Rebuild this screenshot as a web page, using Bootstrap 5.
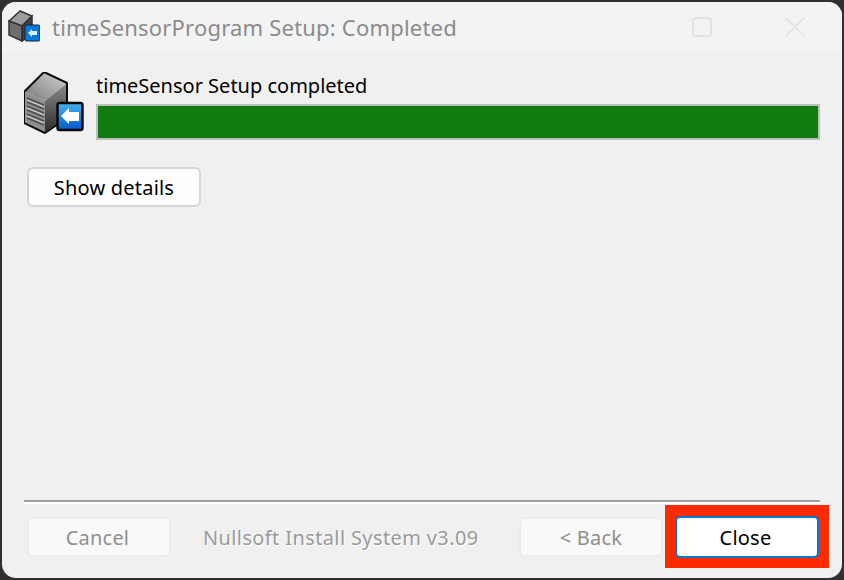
<!DOCTYPE html>
<html lang="en">
  <head>
    <meta charset="UTF-8" />
    <meta name="viewport" content="width=device-width, initial-scale=1.0" />
    <title>timeSensorProgram Setup: Completed</title>
    <link rel="stylesheet" href="https://cdn.jsdelivr.net/npm/bootstrap@5.3.2/dist/css/bootstrap.min.css" />
    <style>
      html, body { height: 100%; }
      body { background: #303030; padding: 2px; overflow: hidden; font-family: "Noto Sans", sans-serif; }
      .setup-win { height: 576px; background: #f0f0f0; border-radius: 14px; overflow: hidden; }
      .title-bar { height: 50px; background: #f3f3f3; padding: 0 0 0 6px; }
      .title-icon { width: 32px; height: 32px; margin: -2px 12px 0 0; filter: blur(0.6px); }
      .title-text { font-size: 22px; color: #8b8b8b; letter-spacing: 0.2px; white-space: nowrap; }
      .win-ctl { width: 20px; height: 20px; }
      .win-max { margin-right: 73px; }
      .win-close { margin-right: 37px; }
      .setup-body { padding: 20px 22px 0 22px; }
      .setup-icon { width: 60px; height: 62px; margin-right: 12px; flex: none; }
      .status-text { font-size: 20px; line-height: 28px; color: #000; white-space: nowrap; }
      .bar-track { height: 36px; border: 2px solid #bdbdbd; background: #107c10; margin-top: 4px; }
      .win-btn { width: 144px; height: 40px; padding: 1px 0 0 0; font-size: 20px; line-height: 1; letter-spacing: 0.2px; border-radius: 6px; color: #000; background: #fdfdfd; border: 2px solid #d6d6d6; }
      .details-btn { width: 174px; margin: 27px 0 0 3px; }
      .win-btn:disabled { background: #f9f9f9; border-color: #ececec; color: #8f8f8f; opacity: 1; }
      .cancel-btn { padding-right: 3px; }
      .foot-line { height: 2px; background: #a0a0a0; box-shadow: 0 2px 0 #fff; }
      .foot-row { margin-top: 15px; padding-left: 3px; }
      .foot-gap { height: 20px; }
      .brand-text { font-size: 20px; color: #9a9a9a; margin: 6px 0 0 32px; letter-spacing: 0.38px; white-space: nowrap; text-shadow: 1px 1px 0 #fff; }
      .red-mark { background: #ff2a00; padding: 11px 10px 10px 10px; margin: -12px -9px -10px 2px; line-height: 0; }
      .close-btn { background: #fff; border-color: #0078d4; height: 42px; border-radius: 5px; padding-right: 3px; }
    </style>
  </head>
  <body>
    <div class="setup-win d-flex flex-column">
      <div class="title-bar d-flex align-items-center">
        <svg class="title-icon" viewBox="0 0 32 32">
          <polygon points="12,1 1,11 14,16 24,6" fill="#9c9c9c" stroke="#333" stroke-width="1.5" />
          <polygon points="1,11 14,16 14,31 1,25" fill="#6e6e6e" stroke="#333" stroke-width="1.5" />
          <polygon points="24,6 14,16 14,31 24,24" fill="#3f3f3f" stroke="#333" stroke-width="1.5" />
          <rect x="17" y="15" width="15" height="16" rx="1.5" fill="#0a78d8" stroke="#124" stroke-width="1" />
          <polygon points="20,23 24,19 24,21 29,21 29,25 24,25 24,27" fill="#dff1ff" />
        </svg>
        <span class="title-text">timeSensorProgram Setup: Completed</span>
        <svg class="win-ctl win-max ms-auto" viewBox="0 0 20 20">
          <rect x="1" y="1" width="18" height="18" rx="2.5" fill="none" stroke="#e3e3e3" stroke-width="2" />
        </svg>
        <svg class="win-ctl win-close" viewBox="0 0 20 20">
          <path d="M0.5 0.5 L19.5 19.5 M19.5 0.5 L0.5 19.5" stroke="#e3e3e3" stroke-width="1.6" fill="none" />
        </svg>
      </div>
      <div class="setup-body flex-grow-1 d-flex flex-column">
        <div class="d-flex">
          <svg class="setup-icon" viewBox="0 0 60 62">
            <defs>
              <linearGradient id="topFace" x1="0" y1="1" x2="1" y2="0">
                <stop offset="0" stop-color="#777" />
                <stop offset="1" stop-color="#d2d2d2" />
              </linearGradient>
              <linearGradient id="sideFace" x1="0" y1="0" x2="0" y2="1">
                <stop offset="0" stop-color="#8a8a8a" />
                <stop offset="1" stop-color="#2c2c2c" />
              </linearGradient>
              <linearGradient id="badgeFill" x1="0" y1="0" x2="0" y2="1">
                <stop offset="0" stop-color="#45b4f0" />
                <stop offset="1" stop-color="#0058c8" />
              </linearGradient>
            </defs>
            <polygon points="20,1 1,20 21,29 42,12" fill="url(#topFace)" />
            <polygon points="1,20 21,29 21,60 1,50" fill="#8f8f8f" />
            <polygon points="42,12 21,29 21,60 42,46" fill="url(#sideFace)" />
            <path d="M3 26 L20 33 M3 30 L20 37 M3 34 L20 41 M3 38 L20 45 M3 42 L20 49 M3 46 L20 53" stroke="#4f4f4f" stroke-width="1.6" fill="none" />
            <path d="M3 28 L20 35 M3 36 L20 43 M3 44 L20 51" stroke="#cfcfcf" stroke-width="1.2" fill="none" />
            <polygon points="20,0 0,20 0,51 21,61 43,46 43,11" fill="none" stroke="#0a0a0a" stroke-width="2" stroke-linejoin="bevel" />
            <rect x="33.5" y="31" width="25" height="27" rx="2" fill="url(#badgeFill)" stroke="#050505" stroke-width="2.4" />
            <polygon points="37,44 45,36 45,40 55,40 55,49 45,49 45,52" fill="#fff" />
          </svg>
          <div class="flex-grow-1">
            <div class="status-text">timeSensor Setup completed</div>
            <div class="bar-track"></div>
          </div>
        </div>
        <div><button type="button" class="btn win-btn details-btn">Show details</button></div>
        <div class="mt-auto">
          <div class="foot-line"></div>
          <div class="foot-row d-flex align-items-start">
            <button type="button" class="btn win-btn cancel-btn" disabled>Cancel</button>
            <span class="brand-text flex-grow-1">Nullsoft Install System v3.09</span>
            <button type="button" class="btn win-btn" disabled>&lt; Back</button>
            <div class="red-mark">
              <button type="button" class="btn win-btn close-btn">Close</button>
            </div>
          </div>
          <div class="foot-gap"></div>
        </div>
      </div>
    </div>
    <script src="https://cdn.jsdelivr.net/npm/bootstrap@5.3.2/dist/js/bootstrap.bundle.min.js"></script>
  </body>
</html>
